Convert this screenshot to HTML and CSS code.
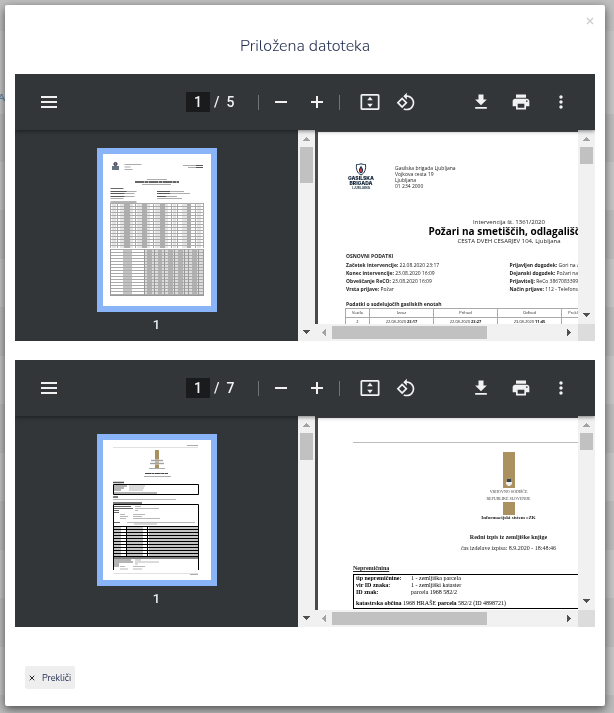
FILE: index.html
```html
<!DOCTYPE html>
<html lang="sl">
<head>
<meta charset="utf-8">
<title>Priložena datoteka</title>
<link rel="stylesheet" href="styles.css">
</head>
<body>
<svg class="sprite" aria-hidden="true">
  <symbol id="menu" viewBox="0 0 20 20"><path d="M2 4h16v2H2zM2 9h16v2H2zM2 14h16v2H2z"/></symbol>
  <symbol id="minus" viewBox="0 0 20 20"><path d="M4 9h12v2H4z"/></symbol>
  <symbol id="plus" viewBox="0 0 20 20"><path d="M4 9h5V4h2v5h5v2h-5v5H9v-5H4z"/></symbol>
  <symbol id="fit" viewBox="0 0 20 20"><path fill-rule="evenodd" d="M2 2h16a1.500 1.500 0 0 1 1.500 1.500v13a1.500 1.500 0 0 1-1.500 1.500H2A1.500 1.500 0 0 1 .5 16.500v-13A1.500 1.500 0 0 1 2 2zm.2 1.800v12.400h15.600V3.800zM10 4.800l2.800 3.400H7.200zM10 15.200l2.800-3.400H7.200z"/></symbol>
  <symbol id="rotate" viewBox="0 0 24 24"><path d="M7.340 6.410L.86 12.900l6.490 6.480 6.490-6.480-6.500-6.490zM3.690 12.900l3.660-3.660L11 12.900l-3.660 3.660-3.650-3.660zm15.670-6.260C17.610 4.880 15.300 4 13 4V.76L8.760 5 13 9.240V6c1.790 0 3.580.68 4.950 2.050 2.730 2.730 2.730 7.170 0 9.900C16.580 19.320 14.790 20 13 20c-.97 0-1.940-.21-2.840-.61l-1.490 1.490C10.020 21.620 11.510 22 13 22c2.300 0 4.610-.88 6.360-2.640 3.520-3.510 3.520-9.210 0-12.720z"/></symbol>
  <symbol id="download" viewBox="0 0 24 24"><path d="M19 9h-4V3H9v6H5l7 7 7-7zM5 18v2h14v-2H5z"/></symbol>
  <symbol id="print" viewBox="0 0 24 24"><path d="M19 8H5c-1.660 0-3 1.340-3 3v6h4v4h12v-4h4v-6c0-1.660-1.340-3-3-3zm-3 11H8v-5h8v5zm3-7c-.55 0-1-.45-1-1s.45-1 1-1 1 .45 1 1-.45 1-1 1zm-1-9H6v4h12V3z"/></symbol>
  <symbol id="more" viewBox="0 0 24 24"><path d="M12 8c1.100 0 2-.9 2-2s-.9-2-2-2-2 .9-2 2 .9 2 2 2zm0 2c-1.100 0-2 .9-2 2s.9 2 2 2 2-.9 2-2-.9-2-2-2zm0 6c-1.100 0-2 .9-2 2s.9 2 2 2 2-.9 2-2-.9-2-2-2z"/></symbol>
  <symbol id="cross" viewBox="0 0 8 8"><path d="M1 1l6 6M7 1L1 7" fill="none" stroke="currentColor" stroke-width="1.300"/></symbol>
  <symbol id="arrow" viewBox="0 0 17 17"><path d="M8 7h1v1h1v1h1v1h1v1H5v-1h1V9h1V8h1z"/></symbol>
</svg>

<div class="backdrop"><a class="backdrop-link" href="#">A</a></div>

<main class="modal" role="dialog" aria-labelledby="title">
  <button class="close" aria-label="Zapri"><svg><use href="#cross"/></svg></button>
  <h1 id="title" class="title">Priložena datoteka</h1>

  <section class="viewer">
    <div class="toolbar">
      <div class="tools"><button class="tool" aria-label="Meni"><svg><use href="#menu"/></svg></button></div>
      <div class="tools tools-center">
        <input class="page-input" value="1" aria-label="Stran"><span class="page-count">/&nbsp; 5</span>
        <span class="separator"></span>
        <button class="tool" aria-label="Pomanjšaj"><svg><use href="#minus"/></svg></button>
        <button class="tool" aria-label="Povečaj"><svg><use href="#plus"/></svg></button>
        <span class="separator separator-wide"></span>
        <button class="tool" aria-label="Prilagodi strani"><svg><use href="#fit"/></svg></button>
        <button class="tool" aria-label="Zavrti"><svg><use href="#rotate"/></svg></button>
      </div>
      <div class="tools tools-end">
        <button class="tool" aria-label="Prenesi"><svg><use href="#download"/></svg></button>
        <button class="tool" aria-label="Natisni"><svg><use href="#print"/></svg></button>
        <button class="tool" aria-label="Več"><svg><use href="#more"/></svg></button>
      </div>
    </div>
    <div class="panes">
      <div class="sidebar">
        <a class="thumb" href="#" aria-label="Stran 1">
          <svg class="thumb-page" viewBox="0 0 108 152" aria-hidden="true">
            <defs>
              <pattern id="rows" width="94" height="3" y="49" x="7" patternUnits="userSpaceOnUse"><path d="M0 .5h94" stroke="#aaa"/><path d="M2 2h4M10 2h13M27 2h13M45 2h13M63 2h3M72 2h9M87 2h4" stroke="#ccc"/><path d="M14 2h6M32 2h5M50 2h5M77 2h4" stroke="#777"/></pattern>
              <pattern id="rows2" width="94" height="3" y="95" x="7" patternUnits="userSpaceOnUse"><path d="M0 .5h94" stroke="#aaa"/><path d="M13 2h9" stroke="#888"/><path d="M34 2h60" stroke="#bbb"/><path d="M37 2h5M48 2h4M58 2h5M68 2h5M82 2h5" stroke="#888"/></pattern>
            </defs>
            <circle cx="12.500" cy="10" r="1.600" fill="#b66" stroke="#235"/>
            <path d="M9 13h7M9 15h7" stroke="#345" stroke-width="1.300"/>
            <g stroke="#888" stroke-width=".7">
              <path d="M21.500 10.500h17M21.500 13h6M21.500 15.500h8M80 11.500h20M85 13.500h15M44 25.500h20M39 30.500h29"/>
              <path d="M7.500 37.500h26M7.500 39.500h24M7.500 42.500h24M7.500 44.500h13M54 37.500h27M54 39.500h33M54 42.500h20M54 44.500h25"/>
            </g>
            <path d="M32 28h44" stroke="#333" stroke-width="1.600" stroke-dasharray="9 .5 4 .5"/>
            <path d="M7.500 34.500h13M7.500 48h26M7.500 37.500h16M7.500 39.500h14M7.500 42.500h14M54 37.500h13M54 39.500h13M54 42.500h9M93 11.500h7M93 13.500h7" stroke="#444" stroke-width=".8"/>
            <path d="M7 49h94v45H7z" fill="url(#rows)"/>
            <path d="M7.500 49v45M14.500 49v45M32.500 49v45M50.500 49v45M68.500 49v45M74.500 49v45M92.500 49v45M100.500 49v45" stroke="#aaa"/>
            <path d="M7 95h94v47H7z" fill="url(#rows2)"/>
            <path d="M7.500 95v47M41.500 95v47M51.500 95v47M61.500 95v47M71.500 95v47M81.500 95v47M85.500 95v47M95.500 95v47M100.500 95v47M7 141.500h94" stroke="#999"/>
          </svg>
        </a>
        <span class="thumb-label">1</span>
      </div>
      <div class="scroll-y"><svg class="arrow muted"><use href="#arrow"/></svg><span class="grip grip-long"></span><svg class="arrow down"><use href="#arrow"/></svg></div>
      <div class="canvas">
        <article class="sheet report">
          <header class="report-head">
            <div class="brigade">
              <svg class="shield" viewBox="0 0 24 26" aria-hidden="true"><path d="M12 1.500c3 1.500 6 1.500 9 1.500 1 9-1 17-9 21C4 20 2 12 3 3c3 0 6 0 9-1.500z" fill="#fff" stroke="#12304d" stroke-width="2"/><path d="M12 5c1 4 5 6 4 11-1 3-2 4-4 5-2-1-3-2-4-5-1-5 3-7 4-11z" fill="#12304d"/><path d="M12 9c1 3 3 5 2 8-1 2-3 2-4 0-1-3 1-5 2-8z" fill="#e33"/></svg>
              <b class="brigade-name">GASILSKA<br>BRIGADA</b>
              <span class="brigade-city">LJUBLJANA</span>
            </div>
            <address class="address">Gasilska brigada Ljubljana<br>Vojkova cesta 19<br>Ljubljana<br>01 234 2000</address>
          </header>
          <div class="report-title">
            <p>Intervencija št. 1361/2020</p>
            <h2>Požari na smetiščih, odlagališčih</h2>
            <p>CESTA DVEH CESARJEV 104, Ljubljana</p>
          </div>
          <h3>OSNOVNI PODATKI</h3>
          <div class="facts">
            <p><b>Začetek intervencije:</b> 22.08.2020 23:17<br><b>Konec intervencije:</b> 23.08.2020 16:09<br><b>Obveščanje ReCO:</b> 23.08.2020 16:09<br><b>Vrsta prijave:</b> Požar</p>
            <p><b>Prijavljen dogodek:</b> Gori na a<br><b>Dejanski dogodek:</b> Požari na s<br><b>Prijavitelj:</b> ReCo 38670833993<br><b>Način prijave:</b> 112 - Telefonski</p>
          </div>
          <h3>Podatki o sodelujočih gasilskih enotah</h3>
          <table class="units">
            <tr><th class="narrow">Vozilo</th><th class="time">Izvoz</th><th class="time">Prihod</th><th class="time">Odhod</th><th class="narrow">Prekl.</th><th></th></tr>
            <tr><td>2</td><td>22.08.2020 <b>23:17</b></td><td>22.08.2020 <b>23:27</b></td><td>23.08.2020 <b>11:45</b></td><td></td><td></td></tr>
          </table>
        </article>
      </div>
      <div class="scroll-y"><svg class="arrow muted"><use href="#arrow"/></svg><span class="grip"></span><svg class="arrow down"><use href="#arrow"/></svg></div>
      <div class="scroll-x"><svg class="arrow left muted"><use href="#arrow"/></svg><span class="grip-x"></span><svg class="arrow right"><use href="#arrow"/></svg></div>
      <div class="corner"></div>
    </div>
  </section>

  <section class="viewer">
    <div class="toolbar">
      <div class="tools"><button class="tool" aria-label="Meni"><svg><use href="#menu"/></svg></button></div>
      <div class="tools tools-center">
        <input class="page-input" value="1" aria-label="Stran"><span class="page-count">/&nbsp; 7</span>
        <span class="separator"></span>
        <button class="tool" aria-label="Pomanjšaj"><svg><use href="#minus"/></svg></button>
        <button class="tool" aria-label="Povečaj"><svg><use href="#plus"/></svg></button>
        <span class="separator separator-wide"></span>
        <button class="tool" aria-label="Prilagodi strani"><svg><use href="#fit"/></svg></button>
        <button class="tool" aria-label="Zavrti"><svg><use href="#rotate"/></svg></button>
      </div>
      <div class="tools tools-end">
        <button class="tool" aria-label="Prenesi"><svg><use href="#download"/></svg></button>
        <button class="tool" aria-label="Natisni"><svg><use href="#print"/></svg></button>
        <button class="tool" aria-label="Več"><svg><use href="#more"/></svg></button>
      </div>
    </div>
    <div class="panes">
      <div class="sidebar">
        <a class="thumb" href="#" aria-label="Stran 1">
          <svg class="thumb-page" viewBox="0 0 108 140" aria-hidden="true">
            <defs><pattern id="ledger" width="86" height="3" x="10" y="86" patternUnits="userSpaceOnUse"><path d="M0 .5h86" stroke="#000" stroke-width="1.200"/><path d="M1 2h7M14 2h16M36 2h49" stroke="#888"/></pattern></defs>
            <path d="M10 7.500h85M10 133.500h85" stroke="#ccc" stroke-width=".6"/>
            <path d="M52 10h4v18h-4z" fill="#ab9060"/>
            <path d="M48 20.500h12M47 23.500h14" stroke="#ddd" stroke-width="2"/>
            <path d="M48 20.500h12M47 23.500h14M46 28.500h16M84 5.500h11M87 134.500h8M41 36.500h27" stroke="#888" stroke-width=".7"/>
            <path d="M42 33.500h23" stroke="#444" stroke-dasharray="6 .4 3 .4"/>
            <path d="M10 42.500h11M10 57h5M10 63h29" stroke="#555" stroke-width="1.600"/>
            <path d="M10 59.500h63" stroke="#aaa" stroke-width=".8"/>
            <path d="M10.500 44.500h85v10h-85zM10.500 130V64.500h85V130M10.500 116.500h85M10.500 118h85" fill="none" stroke="#000"/>
            <path d="M11 46h13M11 48h10M11 50h7M11 53h43M11 66.500h17M11 68.500h19M11 70.500h5M11 72.500h5M11 82.500h6M11 120h17M11 122h19M11 124h5M11 126h5" stroke="#444" stroke-width=".8"/>
            <path d="M26 46h16M26 48h15M26 50h14M32 66.500h6M32 68.500h24M32 70.500h3M17 74.500h5M30 74.500h12M17 76.500h8M30 76.500h9M17 78.500h6M30 78.500h27M24 82.500h68M31 84h23M32 120h6M32 122h24M32 124h3M17 126.500h5M30 126.500h12M17 129h8M30 129h9" stroke="#999" stroke-width=".7"/>
            <path d="M10 86h86v30H10z" fill="url(#ledger)"/>
            <path d="M10.500 86v30M23.500 86v30M44.500 86v30M95.500 86v30" stroke="#000"/>
          </svg>
        </a>
        <span class="thumb-label">1</span>
      </div>
      <div class="scroll-y"><svg class="arrow muted"><use href="#arrow"/></svg><span class="grip grip-medium"></span><svg class="arrow down"><use href="#arrow"/></svg></div>
      <div class="canvas">
        <article class="sheet extract">
          <hr class="rule">
          <div class="court">
            <div class="band band-top"><svg class="crest" viewBox="0 0 6 8" aria-hidden="true"><path d="M1 0h4v3H1z" fill="#345"/><path d="M0 3h6v2L4 7H2L0 5z" fill="#eee"/></svg></div>
            <span class="court-name">VRHOVNO SODIŠČE<br>REPUBLIKE SLOVENIJE</span>
            <div class="band band-bottom"></div>
          </div>
          <b class="system">Informacijski sistem eZK</b>
          <h2>Redni izpis iz zemljiške knjige</h2>
          <p class="issued">čas izdelave izpisa: 8.9.2020 - 18:48:46</p>
          <h3>Nepremičnina</h3>
          <div class="parcel">
            <dl>
              <dt>tip nepremičnine:</dt><dd>1 - zemljiška parcela</dd>
              <dt>vir ID znaka:</dt><dd>1 - zemljiški kataster</dd>
              <dt>ID znak:</dt><dd>parcela 1968 582/2</dd>
            </dl>
            <p><b>katastrska občina</b> 1968 HRAŠE <b>parcela</b> 582/2 (ID 4898721)</p>
          </div>
        </article>
      </div>
      <div class="scroll-y"><svg class="arrow muted"><use href="#arrow"/></svg><span class="grip"></span><svg class="arrow down"><use href="#arrow"/></svg></div>
      <div class="scroll-x"><svg class="arrow left muted"><use href="#arrow"/></svg><span class="grip-x"></span><svg class="arrow right"><use href="#arrow"/></svg></div>
      <div class="corner"></div>
    </div>
  </section>

  <footer class="actions"><button class="cancel"><svg><use href="#cross"/></svg>Prekliči</button></footer>
</main>
</body>
</html>
```
FILE: styles.css
```css
* { box-sizing: border-box; }
body, h1, h2, h3, p, dl, dd { margin: 0; }
body {
  padding: 5px 9px 7px 5px;
  font-family: Nunito, "Open Sans", sans-serif;
  color: #1f2a4d;
  background: #c0c0c0;
}
button { border: 0; padding: 0; background: none; font: inherit; color: inherit; }
svg { display: block; fill: currentColor; }
.sprite { position: absolute; width: 0; height: 0; }

/* Dimmed table behind the dialog */
.backdrop {
  position: fixed;
  inset: 0;
  z-index: -1;
  padding-top: 90px;
  background:
    linear-gradient(#bfbfbf 31px, #c6c6c6 31px, #c6c6c6 114px, transparent 114px),
    repeating-linear-gradient(#c6c6c6 0 16px, #bcbcbc 16px 65px, #c6c6c6 65px 97px);
}
.backdrop-link {
  display: block;
  width: 5px;
  overflow: hidden;
  direction: rtl;
  font-size: 10px;
  line-height: 16px;
  color: #24598c;
  text-decoration: none;
}

.modal {
  position: relative;
  padding: 31px 10px 17px;
  border-radius: 2px;
  background: #fff;
  box-shadow: 0 3px 10px rgba(0, 0, 0, .6);
}
.close { position: absolute; top: 12px; right: 11px; padding: 0; color: #ccc; }
.close svg { width: 8px; height: 8px; }
.title {
  margin-bottom: 18px;
  font-size: 16px;
  font-weight: 300;
  line-height: 20px;
  text-align: center;
}

.viewer { margin-bottom: 19px; background: #323639; overflow: hidden; }
.toolbar {
  position: relative;
  z-index: 1;
  display: grid;
  grid-template-columns: 1fr auto 1fr;
  align-items: center;
  height: 56px;
  padding: 0 18px;
  color: #f1f1f1;
  background: #323639;
  box-shadow: 0 1px 4px rgba(0, 0, 0, .5);
}
.tools { display: flex; align-items: center; }
.tools-end { justify-content: flex-end; gap: 8px; }
.tool { display: grid; place-items: center; width: 32px; height: 32px; }
.tool svg { width: 20px; height: 20px; }
.tools-center .tool { width: 36px; }
.page-input {
  width: 24px;
  height: 20px;
  border: 0;
  padding: 0;
  font: 500 14px/20px Roboto, sans-serif;
  text-align: center;
  color: #f1f1f1;
  background: #191b1c;
}
.page-count { width: 44px; padding-left: 4px; font: 500 14px/20px Roboto, sans-serif; white-space: nowrap; }
.separator { width: 1px; height: 15px; margin: 0 4px; background: #707376; }
.separator-wide { margin-right: 12px; }

.panes {
  display: grid;
  grid-template-columns: 283px 17px minmax(0, 1fr) 17px;
  grid-template-rows: 194px 17px;
}
.sidebar { grid-row: 1 / 3; display: flex; flex-direction: column; align-items: center; padding-top: 18px; }
.thumb { display: block; border: 6px solid #8ab4f8; background: #fff; }
.thumb-page { width: 108px; height: auto; }
.thumb-label { margin-top: 4px; font: 500 13px/18px Roboto, sans-serif; color: #e4eef5; }
.sidebar + .scroll-y { grid-row: 1 / 3; }
.scroll-y { display: flex; flex-direction: column; align-items: center; background: #f1f1f1; color: #505050; }
.scroll-x { grid-column: 3; display: flex; align-items: center; background: #f1f1f1; color: #505050; }
.arrow { width: 17px; height: 17px; flex: none; }
.muted { color: #a3a3a3; }
.down { margin-top: auto; transform: rotate(180deg); }
.left { transform: rotate(-90deg); }
.right { margin-left: auto; transform: rotate(90deg); }
.grip { width: 13px; height: 17px; background: #c1c1c1; }
.grip-long { height: 36px; }
.grip-medium { height: 27px; }
.grip-x { width: 155px; height: 13px; background: #c1c1c1; }
.corner { background: #dcdcdc; }
.canvas { padding: 2px 0 0 3px; background: #484b4e; overflow: hidden; }
.sheet { width: 382px; height: 540px; background: #fff; color: #222; }

.report { padding: 31px 27px; font: 5px/6px "Open Sans", sans-serif; }
.report-head { display: flex; gap: 20px; height: 55px; padding-left: 2px; }
.brigade { width: 28px; text-align: center; color: #12263a; }
.shield { width: 12px; height: 13px; margin: 0 auto; }
.brigade-name { display: block; font: 900 5px/5px Inter, sans-serif; }
.brigade-city { display: block; font: 700 3px/4px Inter, sans-serif; }
.address { padding-top: 2px; font-style: normal; }
.report-title { text-align: center; font-size: 6px; }
.report-title p { line-height: 8px; }
.report h2 { font-size: 10px; line-height: 11px; color: #000; }
.report h3 { margin-top: 7px; padding-left: 1px; font-size: 5px; line-height: 8px; }
.facts { display: grid; grid-template-columns: 1fr 1fr; padding: 1px 0 0 1px; line-height: 8px; white-space: nowrap; }
.units { width: 100%; border-collapse: collapse; table-layout: fixed; font-size: 4px; line-height: 8px; text-align: center; }
.units th, .units td { padding: 0; border: 1px solid #aaa; font-weight: 400; }
.units .narrow { width: 24px; }
.units .time { width: 64px; }

.extract { padding: 24px 24px 24px 35px; font: 6px/7px "Liberation Serif", serif; text-align: center; }
.rule { height: 1px; margin: 0 0 9px; border: 0; background: #bbb; }
.court { display: flex; flex-direction: column; align-items: center; }
.band { width: 12px; background: #ab9060; }
.band-top { height: 36px; padding: 27px 3px 0; }
.crest { width: 6px; height: 8px; }
.band-bottom { height: 13px; }
.court-name { font-size: 4px; line-height: 7px; color: #444; }
.system { display: block; font-size: 5px; line-height: 5px; }
.extract h2 { margin-top: 12px; font-size: 6px; line-height: 10px; }
.issued { line-height: 12px; }
.extract h3 { margin-top: 8px; font-size: 6px; line-height: 12px; text-align: left; text-decoration: underline; }
.sheet.extract { padding-right: 36px; }
.parcel { margin-right: -36px; padding: 0 2px; border: 1px solid #000; text-align: left; color: #000; }
.parcel dl { display: grid; grid-template-columns: 55px 1fr; }
.parcel dt { font-weight: 700; }
.parcel p { margin-top: 3px; line-height: 9px; }

.actions { padding: 20px 10px 0; }
.cancel {
  display: flex;
  align-items: center;
  gap: 7px;
  height: 23px;
  padding: 0 4px;
  border-radius: 2px;
  font-size: 9px;
  background: #eee;
}
.cancel svg { width: 6px; height: 6px; color: #222; }
```
